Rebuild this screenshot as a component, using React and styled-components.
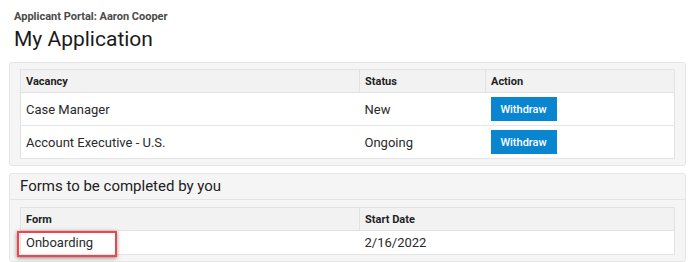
import React from "react";
import styled, { createGlobalStyle } from "styled-components";

const Global = createGlobalStyle`
  html, body { margin: 0; padding: 0; background: #fff; }
  body { font-family: Roboto, "Noto Sans", Arial, sans-serif; color: #222; }
`;

const Page = styled.div`
  width: 691px;
  height: 262px;
  overflow: hidden;
  padding: 10px 5px 0 9px;
  box-sizing: border-box;
`;

const Crumb = styled.div`
  font-size: 11px;
  font-weight: 700;
  color: #4a4a4a;
  padding-left: 5px;
  line-height: 14px;
`;

const Title = styled.h1`
  margin: 0 0 8px;
  padding-left: 5px;
  font-size: 21px;
  font-weight: 400;
  line-height: 30px;
  color: #1a1a1a;
`;

const Panel = styled.section`
  background: #f5f5f5;
  border: 1px solid #e6e6e6;
  border-radius: 3px;
  margin-bottom: ${(p) => p.$gap || 0}px;
  padding-bottom: 6px;
`;

const PanelHead = styled.div`
  font-size: 15px;
  color: #222;
  padding: 0 10px;
  height: 25px;
  line-height: 25px;
  border-bottom: 1px solid #e4e4e4;
`;

const Body = styled.div`
  padding: ${(p) => p.$top}px 10px 0;
`;

const Table = styled.table`
  width: 100%;
  border-collapse: collapse;
  table-layout: fixed;
  background: #fff;
  border: 1px solid #e2e2e2;
`;

const Th = styled.th`
  background: #f2f2f2;
  text-align: left;
  font-size: 11px;
  font-weight: 700;
  color: #1f1f1f;
  height: 22px;
  padding: 0 5px;
  border-left: 1px solid #e2e2e2;
  border-bottom: 1px solid #e2e2e2;
  width: ${(p) => (p.$w ? `${p.$w}px` : "auto")};
`;

const Td = styled.td`
  font-size: 13px;
  color: #2a2a2a;
  height: ${(p) => p.$h}px;
  padding: 0 5px;
  border-bottom: 1px solid #e6e6e6;
  vertical-align: middle;
`;

const Button = styled.button`
  background: #0a86d1;
  color: #fff;
  border: none;
  font-family: inherit;
  font-size: 11px;
  font-weight: 500;
  width: 66px;
  height: 24px;
  padding: 0;
  cursor: pointer;
`;

const Mark = styled.span`
  position: relative;
  display: inline-block;
`;

const Highlight = styled.span`
  position: absolute;
  left: -9px;
  top: -4px;
  width: 96px;
  height: 22px;
  border: 2px solid #f0454d;
  box-shadow: 0 1px 4px rgba(0, 0, 0, 0.45);
  pointer-events: none;
`;

const vacancies = [
  { name: "Case Manager", status: "New" },
  { name: "Account Executive - U.S.", status: "Ongoing" },
];

export default function App() {
  return (
    <>
      <Global />
      <Page>
        <Crumb>Applicant Portal: Aaron Cooper</Crumb>
        <Title>My Application</Title>
        <Panel $gap={7}>
          <Body $top={6}>
            <Table>
              <thead>
                <tr>
                  <Th $w={328}>Vacancy</Th>
                  <Th $w={115}>Status</Th>
                  <Th>Action</Th>
                </tr>
              </thead>
              <tbody>
                {vacancies.map((v) => (
                  <tr key={v.name}>
                    <Td $h={32}>{v.name}</Td>
                    <Td $h={32}>{v.status}</Td>
                    <Td $h={32}>
                      <Button>Withdraw</Button>
                    </Td>
                  </tr>
                ))}
              </tbody>
            </Table>
          </Body>
        </Panel>
        <Panel>
          <PanelHead>Forms to be completed by you</PanelHead>
          <Body $top={7}>
            <Table>
              <thead>
                <tr>
                  <Th $w={328}>Form</Th>
                  <Th>Start Date</Th>
                </tr>
              </thead>
              <tbody>
                <tr>
                  <Td $h={23}>
                    <Mark>
                      Onboarding
                      <Highlight />
                    </Mark>
                  </Td>
                  <Td $h={23}>2/16/2022</Td>
                </tr>
              </tbody>
            </Table>
          </Body>
        </Panel>
      </Page>
    </>
  );
}
